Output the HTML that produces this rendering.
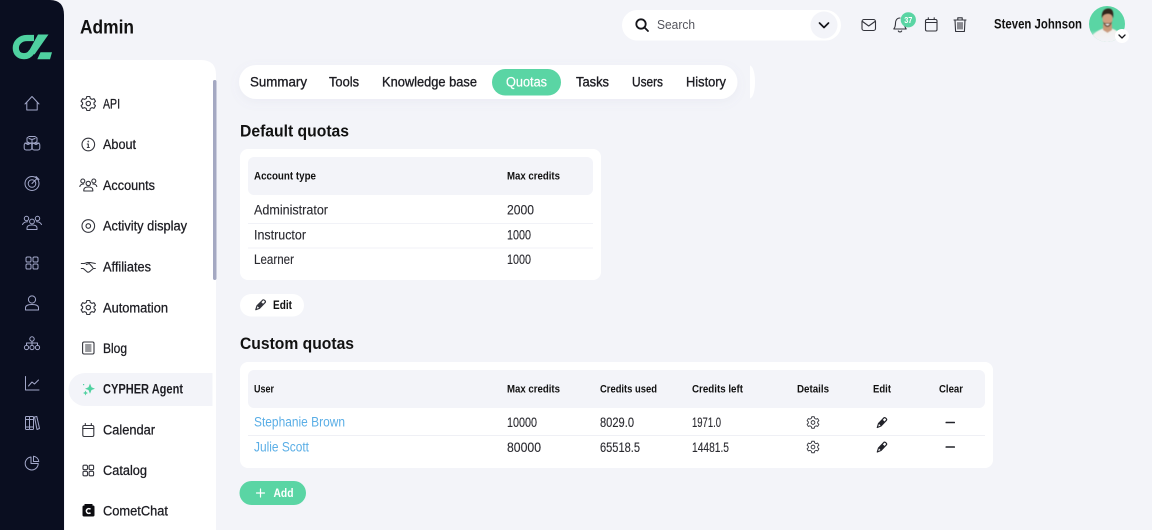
<!DOCTYPE html>
<html lang="en">
<head>
<meta charset="utf-8">
<title>Admin</title>
<style>
html,body{margin:0;padding:0;width:1152px;height:530px;overflow:hidden;background:#f3f4f9}
svg{display:block}
text{font-family:"Liberation Sans",Arial,sans-serif;fill:#1c1c22}
.m{font-size:13.500px;stroke:#1c1c22;stroke-width:.28}
.b{font-size:13.500px;font-weight:700}
.t{font-size:13.500px;stroke:#2a2a30;stroke-width:.12;fill:#2a2a30}
.th{font-size:11px;font-weight:700;fill:#111}
.h{font-size:17px;font-weight:700;fill:#111}
.l{font-size:13.500px;fill:#5aaee6}
.i{fill:none;stroke:#33343c;stroke-width:1.100;stroke-linecap:round;stroke-linejoin:round}
.d{fill:none;stroke:#a3a8ca;stroke-width:1;stroke-linecap:round;stroke-linejoin:round}
</style>
</head>
<body>
<svg width="1152" height="530" viewBox="0 0 1152 530" xmlns="http://www.w3.org/2000/svg">
<defs>
<path id="gear" d="M-1.500-7h3l.5 2 1.700.9 2-.7 1.500 2.600-1.500 1.400v1.600l1.500 1.400-1.500 2.600-2-.7-1.700.9-.5 2h-3l-.5-2-1.700-.9-2 .7-1.500-2.600 1.500-1.400v-1.600l-1.500-1.400 1.500-2.600 2 .7 1.700-.9z"/>
<clipPath id="av"><circle cx="1107" cy="24" r="18"/></clipPath>
<filter id="sh" x="-20%" y="-40%" width="140%" height="200%"><feDropShadow dx="0" dy="3" stdDeviation="5" flood-color="#8a8fb0" flood-opacity=".08"/></filter>
<filter id="blur" x="-20%" y="-20%" width="140%" height="140%"><feGaussianBlur stdDeviation=".5"/></filter>
<linearGradient id="fade" x1="0" y1="0" x2="0" y2="1"><stop offset="0" stop-color="#f3f4f9" stop-opacity="0"/><stop offset="1" stop-color="#f3f4f9"/></linearGradient>
</defs>

<rect width="1152" height="530" fill="#f3f4f9"/>

<!-- rail -->
<path d="M0 0H50Q64 0 64 15V530H0Z" fill="#0a0e20"/>
<path d="M34 38H27C20 38 15.800 43 15.800 48C15.800 53 19 56.200 24 56.200C28 56.200 30 54.500 32 51.500" fill="none" stroke="#4fd1a0" stroke-width="6.200"/>
<path d="M38 34.500H48.500L34.500 54.500L29.500 50Z" fill="#4fd1a0"/>
<path d="M40.500 52.300H52L50 59.300H37.300Z" fill="#4fd1a0"/>

<g class="d">
<path d="M25 104L32 96.500L39 104M26.800 102.500V110H37.200V102.500"/>
<g transform="translate(32 143.500)"><path d="M-3-7h6l2 1.500v3.500l-2.500 1.500h-5l-2.500-1.500v-3.500z"/><rect x="-7.800" y="-.5" width="7.600" height="7" rx="2"/><rect x=".2" y="-.5" width="7.600" height="7" rx="2"/><path d="M-3-5L0-4L3-5M0-4V-1M-7-.5L-4 1L-1-.5M1-.5L4 1L7-.5"/></g>
<g transform="translate(32 183.500)"><circle r="7"/><circle r="3.800"/><path d="M0 0L5-5M4-7L7-4"/></g>
<g transform="translate(32 223)"><circle cx="-5.500" cy="-4.500" r="2.200"/><circle cx="5.500" cy="-4.500" r="2.200"/><circle cy="-1.500" r="2.400"/><path d="M-9.500 1.500C-8.500-.5-6.500-1.300-4.500-1.300M9.500 1.500C8.500-.5 6.500-1.300 4.500-1.300M-5 6.500V5C-5 2.500-2.500 2 0 2S5 2.500 5 5V6.500Z"/></g>
<g transform="translate(32 263)"><rect x="-6" y="-6" width="5" height="5" rx="1.300"/><rect x="1" y="-6" width="5" height="5" rx="1.300"/><rect x="-6" y="1" width="5" height="5" rx="1.300"/><rect x="1" y="1" width="5" height="5" rx="1.300"/></g>
<g transform="translate(32 303)"><circle cy="-3.500" r="3.600"/><path d="M-6.500 7V4.800C-6.500 2.500-4 1.500 0 1.500S6.500 2.500 6.500 4.800V7Z"/></g>
<g transform="translate(32 343.500)"><circle cy="-4.500" r="2.200"/><circle cx="-5.500" cy="4" r="2.100"/><circle cy="4" r="2.100"/><circle cx="5.500" cy="4" r="2.100"/><path d="M0-2.300V1.900M-5.500 1.900V-.5H5.500V1.900"/></g>
<path d="M25.500 376.500V390H39M28.500 386L32 382L34.500 384L38.500 380"/>
<g transform="translate(32 423)"><rect x="-6.500" y="-6.500" width="4" height="13" rx=".7"/><rect x="-2.500" y="-6.500" width="4" height="13" rx=".7"/><path d="M-6.500-3.500H1.500M-6.500 4H1.500M2.500-6L4.800-6.500L7.500 5.500L5 6.500Z"/></g>
<g transform="translate(32 463)"><path d="M-1-6A6.500 6.500 0 1 0 6.200.5H-1Z"/><path d="M1.500-6.800A6 6 0 0 1 6.800-1.500H1.500Z"/></g>
</g>

<!-- page title -->
<text x="80" y="33.500" font-size="19" font-weight="700" textLength="54" lengthAdjust="spacingAndGlyphs" style="fill:#111">Admin</text>

<!-- nav panel -->
<path d="M65 60H201Q216 60 216 75V530H65Z" fill="#fff"/>
<rect x="213" y="80" width="3.500" height="200" rx="1.700" fill="#a4a8c2"/>
<path d="M85 373H212.500V406H85A16.500 16.500 0 0 1 85 373Z" fill="#f3f4f9"/>

<text class="m" x="103" y="108.500" textLength="17" lengthAdjust="spacingAndGlyphs">API</text>
<text class="m" x="103" y="149" textLength="33" lengthAdjust="spacingAndGlyphs">About</text>
<text class="m" x="103" y="190" textLength="52" lengthAdjust="spacingAndGlyphs">Accounts</text>
<text class="m" x="103" y="230.500" textLength="84" lengthAdjust="spacingAndGlyphs">Activity display</text>
<text class="m" x="103" y="271.500" textLength="48" lengthAdjust="spacingAndGlyphs">Affiliates</text>
<text class="m" x="103" y="312.500" textLength="65" lengthAdjust="spacingAndGlyphs">Automation</text>
<text class="m" x="103" y="353" textLength="24" lengthAdjust="spacingAndGlyphs">Blog</text>
<text class="b" x="103" y="393.500" textLength="80" lengthAdjust="spacingAndGlyphs">CYPHER Agent</text>
<text class="m" x="103" y="434.500" textLength="52" lengthAdjust="spacingAndGlyphs">Calendar</text>
<text class="m" x="103" y="475" textLength="44" lengthAdjust="spacingAndGlyphs">Catalog</text>
<text class="m" x="103" y="515.500" textLength="65" lengthAdjust="spacingAndGlyphs">CometChat</text>

<g class="i">
<g transform="translate(88.300 103.500)"><use href="#gear"/><circle r="2.200"/></g>
<g transform="translate(88.300 144.500)"><circle r="6.300"/><path d="M0-.5V3M-1 3H1M-1-.5H0"/><circle cy="-3" r=".3"/></g>
<g transform="translate(88.300 185)"><circle cx="-5.500" cy="-4" r="2"/><circle cx="5.500" cy="-4" r="2"/><circle cy="-1.500" r="2.200"/><path d="M-8.500 1.500C-8-.5-6.500-1-4.500-1M8.500 1.500C8-.5 6.500-1 4.500-1M-4.500 6V5C-4.500 2.500-2.500 2 0 2S4.500 2.500 4.500 5V6Z"/></g>
<g transform="translate(88.300 226)"><circle r="6.300"/><circle r="2.300"/></g>
<g transform="translate(88.300 267)"><path d="M-7-3.500H-4L-1-4.500H2L7-3.500M-7 1.500H-5L-1 5C0 5.500 1 5 1.500 4.500L5 1.500H7M-2-2.500L1-3.500L4.500 .5"/></g>
<g transform="translate(88.300 307.500)"><use href="#gear"/><circle r="2.200"/></g>
<g transform="translate(88.300 348)"><rect x="-5.700" y="-6" width="11.400" height="12" rx="1.500"/><path d="M-2.800-3H2.800M-2.800-1H2.800M-2.800 1H2.800M-2.800 3H2.800" stroke-width=".9"/></g>
<g transform="translate(88.300 430)"><rect x="-5.500" y="-4.500" width="11" height="11" rx="1.500"/><path d="M-5.500-1.500H5.500M-3-6.500V-4.500M3-6.500V-4.500"/></g>
<g transform="translate(88.300 470.500)"><rect x="-5.300" y="-5.300" width="4.500" height="4.500" rx="1.200"/><rect x=".8" y="-5.300" width="4.500" height="4.500" rx="1.200"/><rect x="-5.300" y=".8" width="4.500" height="4.500" rx="1.200"/><rect x=".8" y=".8" width="4.500" height="4.500" rx="1.200"/></g>
</g>
<path d="M90 383.500L91.500 387.300L95 388.700L91.500 390L90 393.700L88.500 390L85 388.700L88.500 387.300Z" fill="#4fd1a0"/>
<path d="M85.500 390.500L86.300 392.300L88 393L86.300 393.700L85.500 395.500L84.700 393.700L83 393L84.700 392.300Z" fill="#4fd1a0"/>
<rect x="83" y="384" width="1.200" height="1.200" fill="#4fd1a0"/>
<rect x="82.500" y="505.500" width="12" height="11" rx="1.500" fill="#0c0c10"/>
<path d="M84.500 505.500V504H92.500V505.500Z" fill="#0c0c10"/>
<path d="M90.500 509.300A2.400 2.400 0 1 0 90.500 512.700" fill="none" stroke="#fff" stroke-width="1.500"/>

<!-- top bar -->
<rect x="622" y="10" width="219" height="30.500" rx="15.200" fill="#fff"/>
<g fill="none" stroke="#15151a" stroke-width="1.800" stroke-linecap="round"><circle cx="641" cy="24" r="4.700"/><path d="M644.500 27.500L648 31"/></g>
<text x="657" y="29" font-size="13" textLength="38" lengthAdjust="spacingAndGlyphs" style="fill:#55565e">Search</text>
<circle cx="824" cy="25" r="13.500" fill="#f3f4f9"/>
<path d="M819.500 23L824 27.500L828.500 23" fill="none" stroke="#15151a" stroke-width="1.700" stroke-linecap="round" stroke-linejoin="round"/>

<g class="i">
<rect x="862" y="19.500" width="13.500" height="11" rx="2"/><path d="M862.500 21.500L868.700 26L875 21.500"/>
<path d="M900 18C896.500 18 895.500 21 895.500 23C895.500 26 895 27.500 893.800 29H906.200C905 27.500 904.500 26 904.500 23M898.300 31C899 32.300 901 32.300 901.700 31"/>
<rect x="925.500" y="19.500" width="11.500" height="11.500" rx="1.500"/><path d="M925.500 22.500H937M928.300 17.800V19.500M934.200 17.800V19.500"/>
<path d="M954 20H966M957.800 20V17.800H962.200V20M955 20L955.600 31.500H964.400L965 20M958 22.500V29M960 22.500V29M962 22.500V29"/>
</g>
<circle cx="908.300" cy="19.800" r="7.600" fill="#5ad5a4"/>
<text x="904.200" y="22.800" font-size="8.500" font-weight="700" textLength="8.200" lengthAdjust="spacingAndGlyphs" style="fill:#fff">37</text>

<text x="994" y="28.500" font-size="13.500" font-weight="700" textLength="88" lengthAdjust="spacingAndGlyphs" style="fill:#111">Steven Johnson</text>
<circle cx="1107" cy="24" r="18" fill="#5ad5a4"/>
<g clip-path="url(#av)">
<g filter="url(#blur)">
<path d="M1088 46C1090 34 1097 31 1103 28.500H1112C1118 31 1123 34 1126 46Z" fill="#f1efeb"/>
<path d="M1103 24H1112V30L1107.500 33L1103 30Z" fill="#c89878"/>
<ellipse cx="1107.500" cy="19" rx="5" ry="7" fill="#cf9f80"/>
<path d="M1102 18.500C1101 10.500 1105 8.500 1108.500 8.500C1112.500 8.500 1114 11.500 1113 18.500C1112 15 1111 14 1108 14C1105 14 1103 15 1102 18.500Z" fill="#33261f"/>
<path d="M1103 21C1103.500 25 1105.500 27 1107.500 27C1109.500 27 1111.500 25 1112 21C1111 23.500 1109.500 23 1107.500 23C1105.500 23 1104 23.500 1103 21Z" fill="#6b4f3b"/>
<path d="M1105 24H1110L1107.500 25.500Z" fill="#fff"/>
</g>
<rect x="1088" y="30" width="38" height="14" fill="url(#fade)"/>
</g>
<circle cx="1122" cy="36" r="7" fill="#fff"/>
<path d="M1119 35L1122 38L1125 35" fill="none" stroke="#15151a" stroke-width="1.300" stroke-linecap="round" stroke-linejoin="round"/>

<!-- tabs -->
<path d="M750 65.500C752.500 66 755 72 755 82C755 92 752.500 98 750 98.500Z" fill="#fff"/>
<rect x="239" y="65" width="498.500" height="34" rx="17" fill="#fff" filter="url(#sh)"/>
<rect x="492" y="69" width="69" height="26.500" rx="13.200" fill="#5ad5a4"/>
<g font-size="13.500" style="stroke:#1c1c22;stroke-width:.32">
<text x="250" y="86.500" textLength="57" lengthAdjust="spacingAndGlyphs">Summary</text>
<text x="329" y="86.500" textLength="30" lengthAdjust="spacingAndGlyphs">Tools</text>
<text x="382" y="86.500" textLength="95" lengthAdjust="spacingAndGlyphs">Knowledge base</text>
<text x="576" y="86.500" textLength="33" lengthAdjust="spacingAndGlyphs">Tasks</text>
<text x="632" y="86.500" textLength="31" lengthAdjust="spacingAndGlyphs">Users</text>
<text x="686" y="86.500" textLength="40" lengthAdjust="spacingAndGlyphs">History</text>
</g>
<text x="506" y="86.500" font-size="13.500" textLength="41" lengthAdjust="spacingAndGlyphs" style="fill:#fff;stroke:#fff;stroke-width:.2">Quotas</text>

<!-- default quotas -->
<text class="h" x="240" y="136.500" textLength="109" lengthAdjust="spacingAndGlyphs">Default quotas</text>
<rect x="240" y="149" width="361" height="131" rx="8" fill="#fff"/>
<rect x="248" y="157" width="345" height="38" rx="6" fill="#f3f4f9"/>
<text class="th" x="254" y="179.500" textLength="62" lengthAdjust="spacingAndGlyphs">Account type</text>
<text class="th" x="507" y="179.500" textLength="53" lengthAdjust="spacingAndGlyphs">Max credits</text>
<rect x="248" y="223" width="345" height="1" fill="#f1f2f7"/>
<rect x="248" y="247.500" width="345" height="1" fill="#f1f2f7"/>
<text class="t" x="254" y="214.500" textLength="74" lengthAdjust="spacingAndGlyphs">Administrator</text>
<text class="t" x="507" y="214.500" textLength="27" lengthAdjust="spacingAndGlyphs">2000</text>
<text class="t" x="254" y="239.500" textLength="52" lengthAdjust="spacingAndGlyphs">Instructor</text>
<text class="t" x="507" y="239.500" textLength="24" lengthAdjust="spacingAndGlyphs">1000</text>
<text class="t" x="254" y="264" textLength="40" lengthAdjust="spacingAndGlyphs">Learner</text>
<text class="t" x="507" y="264" textLength="24" lengthAdjust="spacingAndGlyphs">1000</text>

<!-- edit button -->
<rect x="240" y="294" width="64" height="22.500" rx="11.200" fill="#fff"/>
<path d="M255.800 309.700L257 305.800L262.800 300C263.800 299.300 266 301 265.300 302.300L259.500 308.300Z" fill="none" stroke="#33343c" stroke-width="1.200" stroke-linejoin="round"/>
<path d="M257 305.800L259.500 308.300L263.500 304.300L261 301.800Z" fill="#33343c"/>
<text x="273" y="308.800" font-size="11.500" font-weight="700" textLength="19" lengthAdjust="spacingAndGlyphs" style="fill:#111">Edit</text>

<!-- custom quotas -->
<text class="h" x="240" y="349" textLength="114" lengthAdjust="spacingAndGlyphs">Custom quotas</text>
<rect x="240" y="362" width="753" height="106" rx="8" fill="#fff"/>
<rect x="248" y="370" width="737" height="38" rx="6" fill="#f3f4f9"/>
<text class="th" x="254" y="392.500" textLength="20" lengthAdjust="spacingAndGlyphs">User</text>
<text class="th" x="507" y="392.500" textLength="53" lengthAdjust="spacingAndGlyphs">Max credits</text>
<text class="th" x="600" y="392.500" textLength="57" lengthAdjust="spacingAndGlyphs">Credits used</text>
<text class="th" x="692" y="392.500" textLength="51" lengthAdjust="spacingAndGlyphs">Credits left</text>
<text class="th" x="797" y="392.500" textLength="32" lengthAdjust="spacingAndGlyphs">Details</text>
<text class="th" x="873" y="392.500" textLength="18" lengthAdjust="spacingAndGlyphs">Edit</text>
<text class="th" x="939" y="392.500" textLength="24" lengthAdjust="spacingAndGlyphs">Clear</text>
<rect x="248" y="435" width="737" height="1" fill="#eff0f5"/>
<text class="l" x="254" y="426.500" textLength="91" lengthAdjust="spacingAndGlyphs">Stephanie Brown</text>
<text class="t" x="507" y="427" textLength="30" lengthAdjust="spacingAndGlyphs">10000</text>
<text class="t" x="600" y="427" textLength="34" lengthAdjust="spacingAndGlyphs">8029.0</text>
<text class="t" x="692" y="427" textLength="29" lengthAdjust="spacingAndGlyphs">1971.0</text>
<text class="l" x="254" y="451.500" textLength="55" lengthAdjust="spacingAndGlyphs">Julie Scott</text>
<text class="t" x="507" y="452" textLength="34" lengthAdjust="spacingAndGlyphs">80000</text>
<text class="t" x="600" y="452" textLength="40" lengthAdjust="spacingAndGlyphs">65518.5</text>
<text class="t" x="692" y="452" textLength="37" lengthAdjust="spacingAndGlyphs">14481.5</text>
<g class="i">
<g transform="translate(813 422.500) scale(.82)"><use href="#gear"/><circle r="2.300"/></g>
<g transform="translate(813 447) scale(.82)"><use href="#gear"/><circle r="2.300"/></g>
</g>
<g fill="none" stroke="#22232a" stroke-width="1.200" stroke-linejoin="round">
<path d="M877.300 427.500L878.500 423.500L884 417.800C885 417.100 887.300 419 886.500 420.200L881 426Z"/>
<path d="M877.300 452L878.500 448L884 442.300C885 441.600 887.300 443.500 886.500 444.700L881 450.500Z"/>
</g>
<g fill="#22232a">
<path d="M878.500 423.500L881 426L885 422L882.500 419.500Z"/>
<path d="M878.500 448L881 450.500L885 446.500L882.500 444Z"/>
<rect x="945.500" y="421.800" width="9.500" height="1.500" rx=".6"/>
<rect x="945.500" y="446.300" width="9.500" height="1.500" rx=".6"/>
</g>

<!-- add -->
<rect x="239.500" y="481" width="66.500" height="24" rx="12" fill="#5ad5a4"/>
<path d="M260.500 489V497M256.500 493H264.500" stroke="#fff" stroke-width="1.200" stroke-linecap="round"/>
<text x="273.500" y="497" font-size="11.500" font-weight="700" textLength="20" lengthAdjust="spacingAndGlyphs" style="fill:#fff">Add</text>
</svg>
</body>
</html>
